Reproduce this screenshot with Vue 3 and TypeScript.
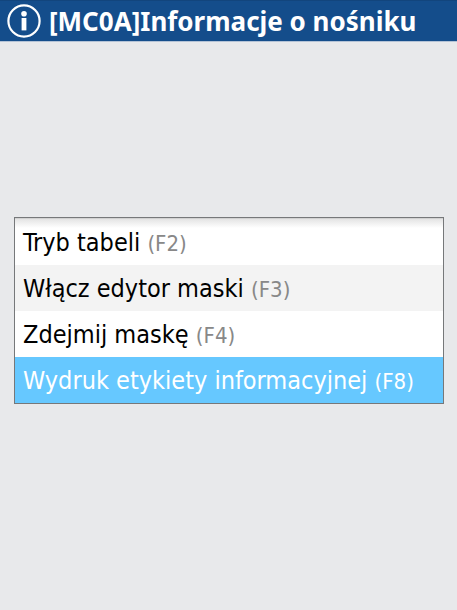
<script setup lang="ts">
import { ref } from 'vue'

interface MenuItem {
  label: string
  key: string
}

const items: MenuItem[] = [
  { label: 'Tryb tabeli', key: 'F2' },
  { label: 'Włącz edytor maski', key: 'F3' },
  { label: 'Zdejmij maskę', key: 'F4' },
  { label: 'Wydruk etykiety informacyjnej', key: 'F8' },
]

const selected = ref<number>(3)
</script>

<template>
  <div class="screen">
    <header class="bar">
      <svg class="info" viewBox="0 0 34 34" aria-hidden="true">
        <circle cx="17" cy="17" r="15.6" fill="none" stroke="#fff" stroke-width="2.2" />
        <circle cx="17" cy="9.8" r="2.8" fill="#fff" />
        <rect x="14.6" y="14" width="4.8" height="12.4" fill="#fff" />
      </svg>
      <h1 class="title">[MC0A]Informacje o nośniku</h1>
    </header>
    <main class="content">
      <ul class="menu">
        <li v-for="(item, i) in items" :key="item.key">
          <button type="button" class="item" :class="{ selected: i === selected }" @click="selected = i">
            {{ item.label }} <span class="hint">({{ item.key }})</span>
          </button>
        </li>
      </ul>
    </main>
  </div>
</template>

<style>
body {
  background: #e8e9eb;
}
</style>

<style scoped>
.screen {
  font-family: Tahoma, "DejaVu Sans Condensed", "DejaVu Sans", sans-serif;
}
.bar {
  display: flex;
  align-items: center;
  gap: 8px;
  height: 42px;
  box-sizing: border-box;
  padding: 0 7px;
  background: #144d8b;
  border-top: 1px solid #12457d;
  border-bottom: 1px solid #b4c3d6;
}
.info {
  width: 34px;
  height: 34px;
  flex: none;
}
.title {
  margin: 0;
  color: #fff;
  font-family: Tahoma, "Noto Sans", sans-serif;
  font-size: 26px;
  line-height: 36px;
  font-weight: 700;
  white-space: nowrap;
}
.content {
  padding: 175px 13px 0 14px;
}
.menu {
  margin: 0;
  padding: 1px 0 0;
  list-style: none;
  border: 1px solid #76787a;
  background: #d2d2d2;
}
.item {
  display: block;
  width: 100%;
  height: 46px;
  padding: 2px 8px 0;
  border: 0;
  background: #fff;
  color: #000;
  font-family: inherit;
  font-size: 25px;
  line-height: 44px;
  text-align: left;
  white-space: nowrap;
}
li:first-child .item {
  background: linear-gradient(#e4e4e4, #fff 9px);
}
li:nth-child(even) .item {
  background: #f3f3f3;
}
.hint {
  color: #888;
  font-size: 22px;
}
.menu .item.selected {
  background: #66c8ff;
  color: #fff;
}
.selected .hint {
  color: #fff;
}
</style>
